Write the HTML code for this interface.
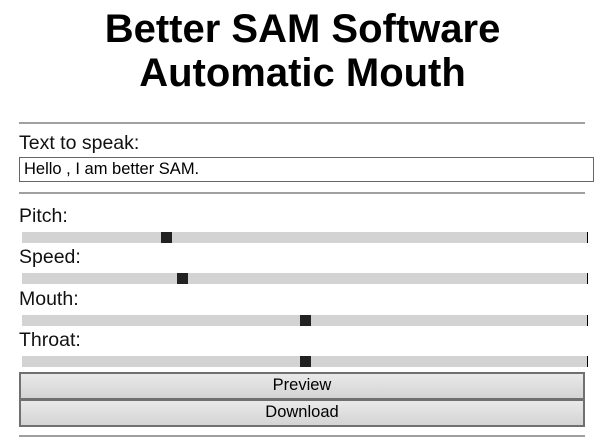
<!DOCTYPE html>
<html><head><style>
body{margin:0;width:610px;height:447px;background:#fff;font-family:"Liberation Sans",Arial,sans-serif;position:relative;overflow:hidden}
.a{position:absolute}
h1{position:absolute;left:0;width:605px;top:7px;margin:0;text-align:center;font-size:40px;line-height:44px;font-weight:bold}
.hr{position:absolute;left:19px;width:566px;height:0;border-top:2px solid #a0a0a0}
.lbl{position:absolute;left:19px;font-size:19.5px;color:#111}
.tr{position:absolute;left:22px;width:565px;height:11px;background:#d3d3d3;border-right:1px solid #000}
.th{position:absolute;width:11px;height:11px;background:#222;top:0}
.btn{position:absolute;left:19px;width:562px;height:24px;border:2px solid #707070;background:linear-gradient(#e9e9e9,#d4d4d4);text-align:center;font-size:16.5px;line-height:23px;color:#000}
</style></head><body>
<h1>Better SAM Software<br>Automatic Mouth</h1>
<div class="hr" style="top:122px"></div>
<div class="lbl" style="top:132px">Text to speak:</div>
<div class="a" style="left:19px;top:157px;width:569px;height:23px;border:1px solid #666;font-size:16.5px;line-height:23px;padding-left:4px;box-sizing:content-box">Hello , I am better SAM.</div>
<div class="hr" style="top:192px"></div>
<div class="lbl" style="top:205px">Pitch:</div>
<div class="tr" style="top:232px"><div class="th" style="left:139px"></div></div>
<div class="lbl" style="top:246px">Speed:</div>
<div class="tr" style="top:273px"><div class="th" style="left:155px"></div></div>
<div class="lbl" style="top:288px">Mouth:</div>
<div class="tr" style="top:315px"><div class="th" style="left:278px"></div></div>
<div class="lbl" style="top:329px">Throat:</div>
<div class="tr" style="top:356px"><div class="th" style="left:278px"></div></div>
<div class="btn" style="top:372px">Preview</div>
<div class="btn" style="top:399px">Download</div>
<div class="hr" style="top:435px"></div>
</body></html>
